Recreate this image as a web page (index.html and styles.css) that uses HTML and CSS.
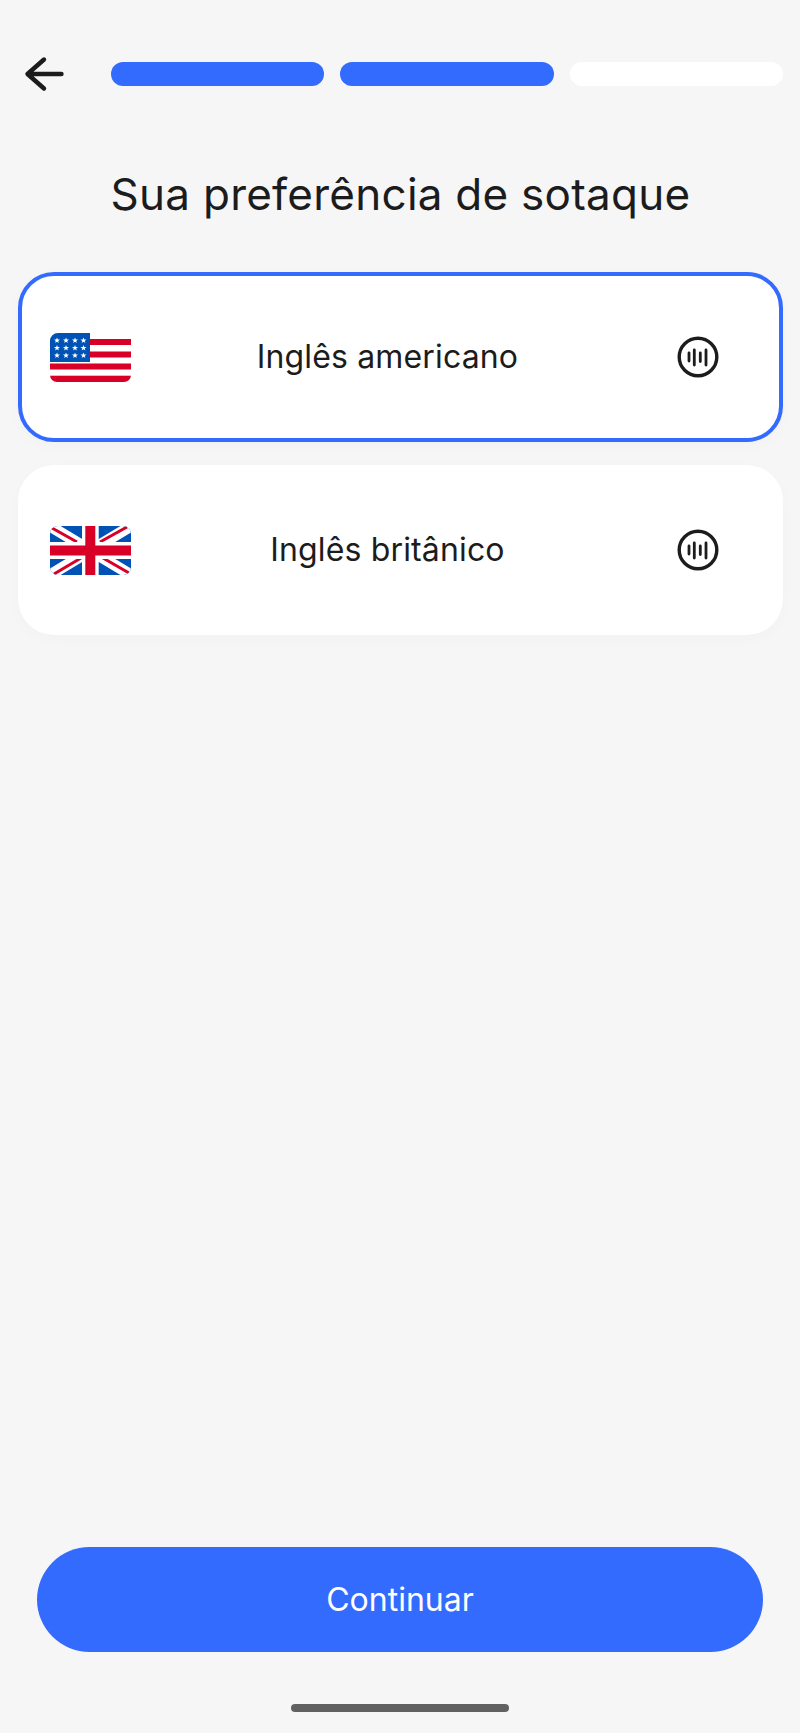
FILE: index.html
```html
<!DOCTYPE html>
<html lang="pt">
<head>
  <meta charset="UTF-8">
  <meta name="viewport" content="width=device-width, initial-scale=1.0">
  <title>Sua preferência de sotaque</title>
  <link rel="stylesheet" href="styles.css">
</head>
<body>
  <div class="screen">
    <div class="top-bar">
      <svg class="back" width="40" height="36" viewBox="0 0 40 36" fill="none" stroke="#1c1c1c" stroke-width="4.400" stroke-linecap="round" stroke-linejoin="round">
        <path d="M37.500 18H4M20 3.500L3.500 18L20 32.500"/>
      </svg>
      <div class="progress">
        <span class="step done"></span>
        <span class="step done"></span>
        <span class="step"></span>
      </div>
    </div>

    <h1 class="title">Sua preferência de sotaque</h1>

    <div class="options">
      <div class="option selected">
        <svg class="flag" width="81" height="49" viewBox="0 0 81 49">
          <defs>
            <clipPath id="usClip"><path d="M10 0H40V6H81V42a7 7 0 0 1-7 7H7a7 7 0 0 1-7-7V8a8 8 0 0 1 8-8z"/></clipPath>
            <polygon id="star" points="0,-3 0.800,-1 3,-1 1.200,0.400 1.900,2.600 0,1.300 -1.900,2.600 -1.200,0.400 -3,-1 -0.800,-1" fill="#fff"/>
          </defs>
          <g clip-path="url(#usClip)">
            <rect width="81" height="49" fill="#fff"/>
            <rect y="6" width="81" height="6" fill="#d80027"/>
            <rect y="18.500" width="81" height="6" fill="#d80027"/>
            <rect y="30.500" width="81" height="6" fill="#d80027"/>
            <rect y="42.700" width="81" height="6.300" fill="#d80027"/>
            <rect width="40" height="29" fill="#0052b4"/>
          </g>
          <use href="#star" x="7" y="7.500"/><use href="#star" x="16" y="7.500"/><use href="#star" x="25" y="7.500"/><use href="#star" x="33.500" y="7.500"/>
          <use href="#star" x="7" y="15"/><use href="#star" x="16" y="15"/><use href="#star" x="25" y="15"/><use href="#star" x="33.500" y="15"/>
          <use href="#star" x="7" y="22.500"/><use href="#star" x="16" y="22.500"/><use href="#star" x="25" y="22.500"/><use href="#star" x="33.500" y="22.500"/>
        </svg>
        <span class="option-label">Inglês americano</span>
        <svg class="sound" width="42" height="42" viewBox="0 0 42 42" fill="none" stroke="#1c1c1c" stroke-linecap="round">
          <circle cx="21" cy="21" r="18.800" stroke-width="3.400"/>
          <path d="M12 17v8M17.300 14v15M23.300 17v8.500M29 14v15" stroke-width="2.800"/>
        </svg>
      </div>

      <div class="option">
        <svg class="flag" width="81" height="49" viewBox="0 0 81 49">
          <defs>
            <clipPath id="ukClip"><rect width="81" height="49" rx="8"/></clipPath>
          </defs>
          <g clip-path="url(#ukClip)">
            <rect width="81" height="49" fill="#0052b4"/>
            <path d="M0 0L81 49M81 0L0 49" stroke="#fff" stroke-width="11"/>
            <path d="M2 2L27 16M77 1L50 16M4 48L31 32M79 47L53 32" stroke="#d80027" stroke-width="3"/>
            <rect x="32" width="16.700" height="49" fill="#fff"/>
            <rect y="16" width="81" height="17" fill="#fff"/>
            <rect x="35.300" width="10" height="49" fill="#d80027"/>
            <rect y="19.500" width="81" height="10" fill="#d80027"/>
          </g>
        </svg>
        <span class="option-label">Inglês britânico</span>
        <svg class="sound" width="42" height="42" viewBox="0 0 42 42" fill="none" stroke="#1c1c1c" stroke-linecap="round">
          <circle cx="21" cy="21" r="18.800" stroke-width="3.400"/>
          <path d="M12 17v8M17.300 14v15M23.300 17v8.500M29 14v15" stroke-width="2.800"/>
        </svg>
      </div>
    </div>

    <div class="footer">
      <button class="continue">Continuar</button>
      <div class="home-bar"></div>
    </div>
  </div>
</body>
</html>
```

FILE: styles.css
```css
* { box-sizing: border-box; }
html, body { margin: 0; height: 100%; }
body {
  font-family: Inter, "Liberation Sans", sans-serif;
  background: #f6f6f7;
  color: #1c1c1c;
}
.screen {
  height: 1733px;
  display: flex;
  flex-direction: column;
  padding: 62px 17px 21px 18px;
}
.top-bar { display: flex; align-items: center; height: 24px; }
.back { margin-left: 6px; flex: none; }
.progress { display: flex; gap: 16px; flex: 1; margin-left: 47px; }
.step { flex: 1; height: 24px; border-radius: 12px; background: #fff; }
.step.done { background: #346bff; }
.title {
  margin: 78px 0 0;
  text-align: center;
  font-size: 44px;
  letter-spacing: 0.25px;
  line-height: 60px;
  font-weight: 400;
}
.options { display: flex; flex-direction: column; gap: 23px; margin-top: 48px; }
.option {
  height: 170px;
  display: flex;
  align-items: center;
  padding: 0 60px 0 28px;
  background: #fff;
  border: 4px solid transparent;
  border-radius: 36px;
  box-shadow: 0 4px 16px rgba(0, 0, 0, 0.02);
}
.option.selected { border-color: #346bff; }
.flag, .sound { flex: none; }
.option-label { flex: 1; padding: 0 33px 2px 0; text-align: center; font-size: 32px; letter-spacing: 0.15px; }
.footer { margin-top: auto; padding-right: 1px; display: flex; flex-direction: column; align-items: center; }
.continue {
  width: 726px;
  height: 105px;
  border: none;
  border-radius: 53px;
  background: #346bff;
  color: #fff;
  font-family: inherit;
  font-size: 32px;
  cursor: pointer;
}
.home-bar { width: 218px; height: 8px; margin-top: 52px; border-radius: 4px; background: #616161; }
```
